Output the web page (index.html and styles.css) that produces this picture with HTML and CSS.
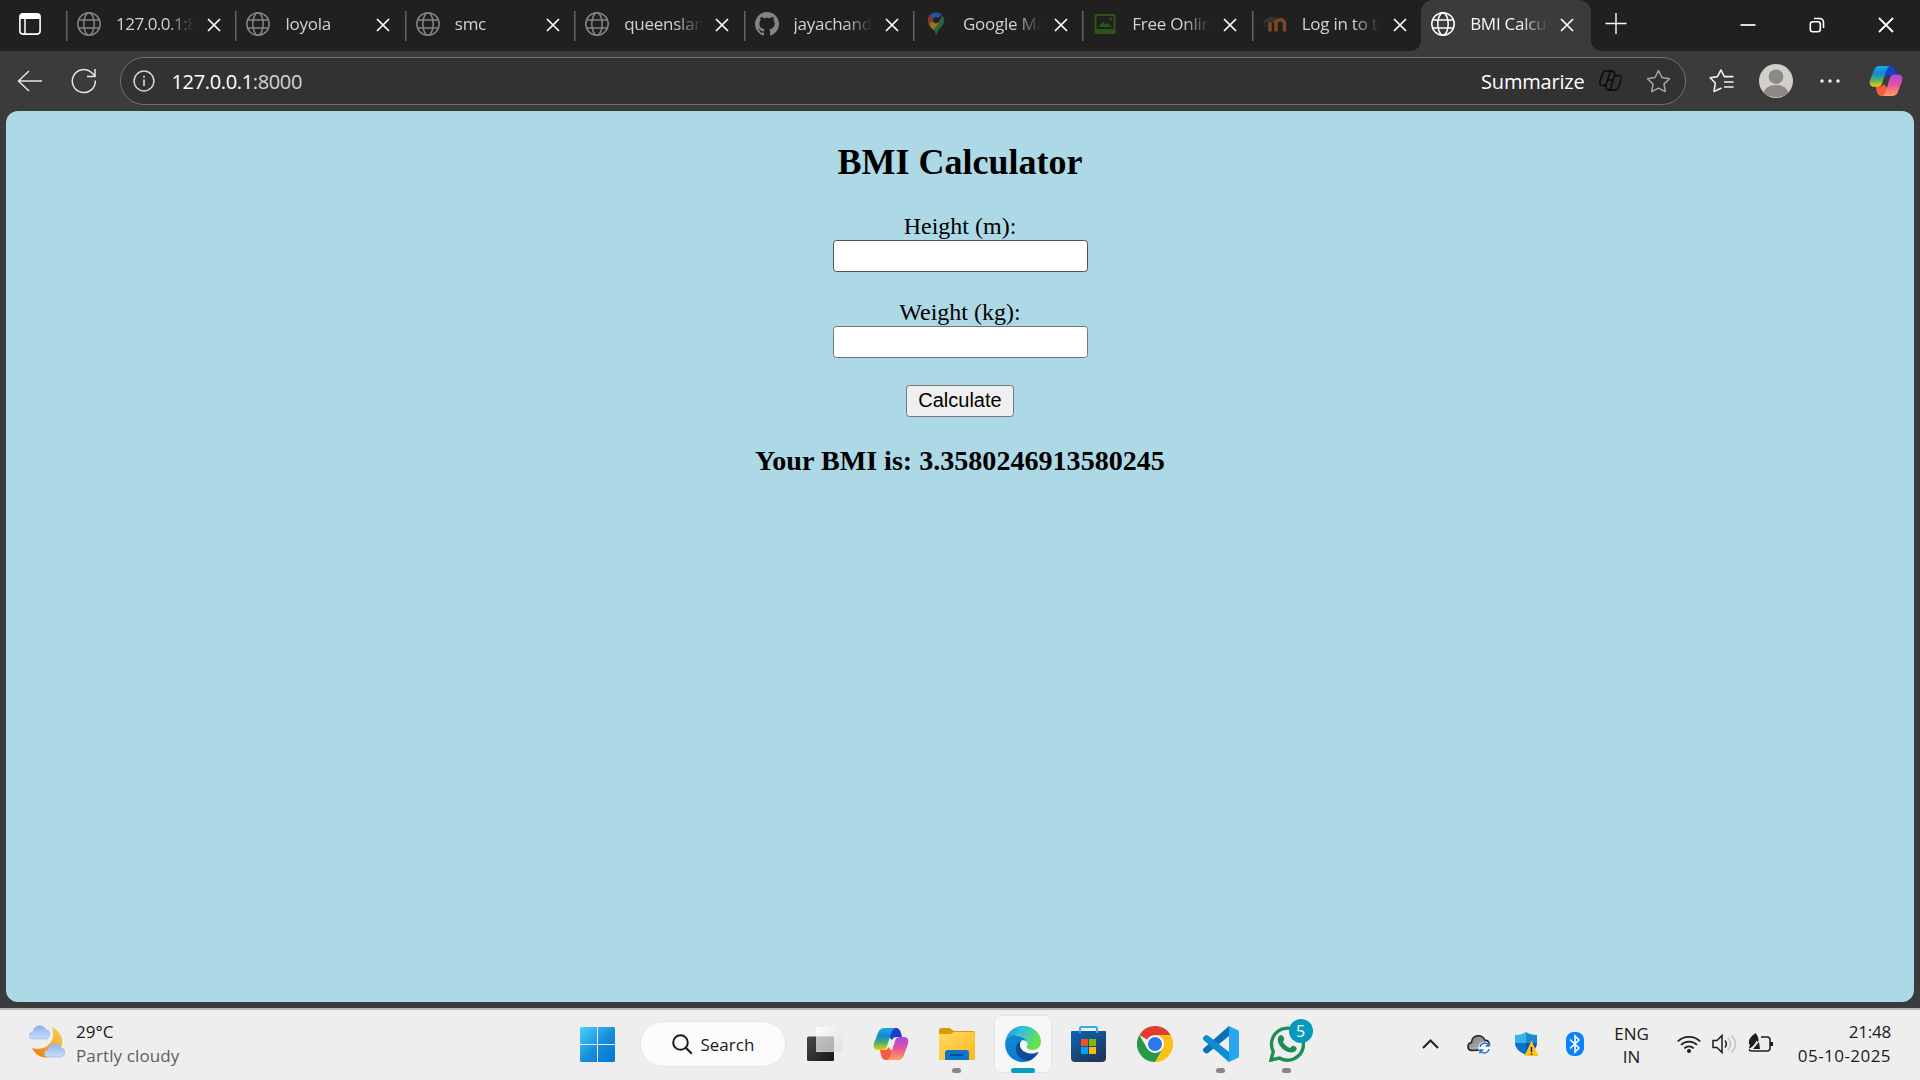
FILE: index.html
```html
<!DOCTYPE html>
<html lang="en">
<head>
<meta charset="utf-8">
<title>BMI Calculator</title>
<link rel="stylesheet" href="styles.css">
</head>
<body>
<svg class="defs" aria-hidden="true">
  <defs>
    <symbol id="globe" viewBox="0 0 24 24"><g fill="none" stroke="currentColor" stroke-width="1.5"><circle cx="12" cy="12" r="11.2"/><ellipse cx="12" cy="12" rx="5.2" ry="11.2"/><path d="M1.8 8h20.4M1.8 16h20.4"/></g></symbol>
    <symbol id="close" viewBox="0 0 14 14"><path d="M1 1l12 12M13 1L1 13" fill="none" stroke="currentColor" stroke-width="1.7"/></symbol>
    <linearGradient id="cpA" x1="0" y1="0" x2="0" y2="1"><stop offset="0" stop-color="#19a8ee"/><stop offset=".35" stop-color="#1686d6"/><stop offset=".65" stop-color="#42ad70"/><stop offset="1" stop-color="#f5cc08"/></linearGradient>
    <linearGradient id="cpB" x1="0" y1="0" x2="0" y2="1"><stop offset="0" stop-color="#a24be8"/><stop offset=".5" stop-color="#e9529c"/><stop offset="1" stop-color="#ffa35c"/></linearGradient>
    <symbol id="copilot" viewBox="0 0 36 34">
      <path d="M17 1h6c3 0 4 2 5 5l1 4h-5c-3 0-4 1-5 3l-3-3z" fill="#173fc7"/>
      <path d="M19 33h-6c-3 0-4-2-5-5l-1-5h4c3 0 4-1 4-3l4 4z" fill="#f45d3d"/>
      <path d="M11 1h11c-2 1-3 3-4 6l-4 12c-1 3-2 4-5 4H5c-4 0-5-3-4-7L5 6c1-3 3-5 6-5z" fill="url(#cpA)"/>
      <path d="M25 33H14c2-1 3-3 4-6l4-13c1-3 2-4 5-4h4c4 0 5 3 4 7l-4 11c-1 3-3 5-6 5z" fill="url(#cpB)"/>
    </symbol>
    <linearGradient id="winPane" gradientUnits="userSpaceOnUse" x1="0" y1="0" x2="35" y2="35"><stop offset="0" stop-color="#4cd2ff"/><stop offset=".55" stop-color="#168bd9"/><stop offset="1" stop-color="#0078d4"/></linearGradient>
    <linearGradient id="dark" x1="0" y1="0" x2="1" y2="1"><stop stop-color="#4b4a48"/><stop offset="1" stop-color="#181818"/></linearGradient>
    <linearGradient id="pale" x1="0" y1="0" x2="1" y2="1"><stop stop-color="#fff" stop-opacity=".95"/><stop offset="1" stop-color="#ddd" stop-opacity=".75"/></linearGradient>
    <linearGradient id="folder" x1="0" y1="0" x2="1" y2="1"><stop stop-color="#ffd965"/><stop offset="1" stop-color="#fcb91a"/></linearGradient>
    <linearGradient id="edgeTop" x1="0" y1="0" x2="1" y2=".4"><stop stop-color="#1590d5"/><stop offset=".45" stop-color="#32c0df"/><stop offset="1" stop-color="#68e34d"/></linearGradient>
    <linearGradient id="edgeLeft" x1="0" y1="0" x2=".5" y2="1"><stop stop-color="#1488d2"/><stop offset="1" stop-color="#0a78d6"/></linearGradient>
    <linearGradient id="store" x1="0" y1="0" x2=".6" y2="1"><stop stop-color="#0d65b8"/><stop offset="1" stop-color="#20375d"/></linearGradient>
    <linearGradient id="moon" x1="1" y1="0" x2="0" y2="1"><stop stop-color="#f6cd62"/><stop offset=".5" stop-color="#f2ae28"/><stop offset="1" stop-color="#ee6e13"/></linearGradient>
    <linearGradient id="cloud" x1="0" y1="0" x2="0" y2="1"><stop stop-color="#8fb3ec"/><stop offset="1" stop-color="#c9dcf8"/></linearGradient>
    <linearGradient id="grey" x1="0" y1="0" x2="1" y2="1"><stop stop-color="#777"/><stop offset="1" stop-color="#c5c5c5"/></linearGradient>
  </defs>
</svg>

<header class="tabstrip">
  <div class="workspace"><svg width="22" height="22" viewBox="0 0 22 22"><rect x=".9" y=".9" width="20.2" height="20.2" rx="3" fill="none" stroke="#fff" stroke-width="1.6"/><path d="M1 6V4a3 3 0 0 1 3-3h14a3 3 0 0 1 3 3v2z" fill="#fff"/><path d="M6 6v15" stroke="#fff" stroke-width="1.5"/></svg></div>
  <nav class="tabs">
    <div class="tab"><svg class="favicon"><use href="#globe"/></svg><span class="label numeric">127.0.0.1:8000</span><svg class="close"><use href="#close"/></svg></div>
    <div class="tab"><svg class="favicon"><use href="#globe"/></svg><span class="label">loyola</span><svg class="close"><use href="#close"/></svg></div>
    <div class="tab"><svg class="favicon"><use href="#globe"/></svg><span class="label">smc</span><svg class="close"><use href="#close"/></svg></div>
    <div class="tab"><svg class="favicon"><use href="#globe"/></svg><span class="label">queensland</span><svg class="close"><use href="#close"/></svg></div>
    <div class="tab"><svg class="favicon" viewBox="0 0 16 16"><path fill="currentColor" d="M8 0C3.58 0 0 3.58 0 8c0 3.54 2.29 6.53 5.47 7.59.4.07.55-.17.55-.38 0-.19-.01-.82-.01-1.49-2.01.37-2.53-.49-2.69-.94-.09-.23-.48-.94-.82-1.13-.28-.15-.68-.52-.01-.53.63-.01 1.08.58 1.23.82.72 1.21 1.87.87 2.33.66.07-.52.28-.87.51-1.07-1.78-.2-3.64-.89-3.64-3.95 0-.87.31-1.59.82-2.15-.08-.2-.36-1.02.08-2.12 0 0 .67-.21 2.2.82a7.6 7.6 0 0 1 4 0c1.53-1.04 2.2-.82 2.2-.82.44 1.1.16 1.92.08 2.12.51.56.82 1.27.82 2.15 0 3.07-1.87 3.75-3.65 3.95.29.25.54.73.54 1.48 0 1.07-.01 1.93-.01 2.2 0 .21.15.46.55.38A8.01 8.01 0 0 0 16 8c0-4.42-3.58-8-8-8z"/></svg><span class="label">jayachandra</span><svg class="close"><use href="#close"/></svg></div>
    <div class="tab"><svg class="favicon" viewBox="0 0 24 24"><path d="M4 8a8 8 0 0 1 14-5l-6 5-6 5c-1-1-2-3-2-5z" fill="#265495"/><path d="M5.5 3.5L10 7l-5 6c-1.500-3-1.700-6 .5-9.500z" fill="#8b352b"/><path d="M18.500 3.500c3 4 1.500 8-.5 10.500-3 4-4.500 5-6 10-1-4-1.500-5-2.500-7z" fill="#28653a"/><path d="M5 12l5-4 5 3-5.500 7c-2-2-3.500-3-4.500-6z" fill="#967321"/><circle cx="12" cy="8.300" r="3" fill="#202020"/></svg><span class="label">Google Maps</span><svg class="close"><use href="#close"/></svg></div>
    <div class="tab"><svg class="favicon" viewBox="0 0 24 24"><rect x="1.500" y="2" width="21" height="20" rx="1.500" fill="#2f5418"/><path d="M3.500 4h17v13h-17z" fill="#202020"/><path d="M5 15l5-5 2.500 2.500 2-1.500 4.500 4z" fill="#2f5418"/><circle cx="17.500" cy="7" r="1.400" fill="#2f5418"/></svg><span class="label">Free Online</span><svg class="close"><use href="#close"/></svg></div>
    <div class="tab"><svg class="favicon" viewBox="0 0 24 24"><path d="M7 20v-8c0-4 6-4 6 0v8m0-8c0-5 8.500-5 8.500 0v8" fill="none" stroke="#7d4821" stroke-width="3.500" transform="translate(0 -.5)"/><path d="M0 9l7-4 7 1-5 4-6 0zM2 9v6" fill="#393534" stroke="#33302f"/></svg><span class="label">Log in to the</span><svg class="close"><use href="#close"/></svg></div>
    <div class="tab active"><svg class="favicon"><use href="#globe"/></svg><span class="label">BMI Calculator</span><svg class="close"><use href="#close"/></svg></div>
  </nav>
  <div class="newtab"><svg width="22" height="22" viewBox="0 0 22 22"><path d="M11 0v21M.5 10.500h21" stroke="#fff" stroke-width="1.400"/></svg></div>
  <div class="window-controls">
    <svg width="16" height="16" viewBox="0 0 16 16"><path d="M.5 8h15" stroke="#fff" stroke-width="1.700"/></svg>
    <svg width="16" height="16" viewBox="0 0 16 16"><g fill="none" stroke="#fff" stroke-width="1.600"><rect x="1.300" y="4.800" width="10" height="10" rx="2.500"/><path d="M5 1.500h5.500a4 4 0 0 1 4 4V11"/></g></svg>
    <svg width="16" height="16" viewBox="0 0 16 16"><path d="M1 1l14 14M15 1L1 15" stroke="#fff" stroke-width="1.800"/></svg>
  </div>
</header>

<div class="toolbar">
  <svg class="back" width="25" height="22" viewBox="0 0 25 22"><path d="M12 1L1.500 11 12 21M1.500 11H25" fill="none" stroke="#e6e6e6" stroke-width="1.500"/></svg>
  <svg class="reload" width="26" height="26" viewBox="0 0 26 26"><path d="M24.300 12.500A11.500 11.500 0 1 1 20.500 4.500L24 8M24 1v7.500h-8" fill="none" stroke="#e6e6e6" stroke-width="1.500"/></svg>
  <div class="address">
    <svg width="22" height="22" viewBox="0 0 22 22"><circle cx="11" cy="11" r="9.900" fill="none" stroke="#d4d4d4" stroke-width="1.500"/><path d="M11 9.500V16M11 5.800v2" stroke="#d4d4d4" stroke-width="1.700"/></svg>
    <span class="url">127.0.0.1<span class="port">:8000</span></span>
    <span class="summarize">Summarize</span>
    <svg class="mini-copilot" width="23" height="22" viewBox="0 0 23 22"><g fill="none" stroke="#0b0b0b" stroke-width="1.400"><path d="M6.500 1H13c2.200 0 2.600 2 3 4.500h3.500c2.500 0 3 2 2.500 4l-2 6.500c-.7 2.500-1.800 4-4 4H9.500c-2 0-2.300-2-2.800-4.500H3.500C1 15.500.5 13.500 1 11.500L3 5c.7-2.500 1.500-4 3.500-4z"/><path d="M13 1c-1.800 0-2.200 1.500-2.700 3.500L8 12.500c-.5 2-1.200 3-3 3M9.500 20c1.800 0 2.200-1.500 2.700-3.500l2.300-8c.5-2 1.200-3 3-3M9 10h5"/></g></svg>
    <svg class="star" width="25" height="24" viewBox="0 0 25 24"><path d="M12.500 1.500l3.500 7 7.500 1.200-5.500 5.400 1.300 7.500-6.800-3.500-6.800 3.500L7 15.100 1.500 9.700 9 8.500z" fill="none" stroke="#a5a5a5" stroke-width="1.500" stroke-linejoin="round"/></svg>
  </div>
  <svg class="favorites" width="25" height="24" viewBox="0 0 25 24"><path d="M12.500 19L5 22.500l1.300-8.500L1.200 8.800l7.200-1.200L12 1l3.300 6.600h9.200M15 13h9.500M15 18h9.500" fill="none" stroke="#f1f1f1" stroke-width="1.600" stroke-linejoin="round"/></svg>
  <svg class="profile" width="34" height="34" viewBox="0 0 34 34"><circle cx="17" cy="17" r="17" fill="#d0cfcc"/><circle cx="17" cy="12.700" r="7.300" fill="#8c8885"/><path d="M5 29a12 8 0 0 1 24 0c-6 5.500-18 5.500-24 0z" fill="#8c8885"/></svg>
  <svg class="more" width="20" height="4" viewBox="0 0 20 4"><g fill="#f4f4f4"><circle cx="2" cy="2" r="1.700"/><circle cx="10" cy="2" r="1.700"/><circle cx="18" cy="2" r="1.700"/></g></svg>
  <svg class="sidebar" width="34" height="32"><use href="#copilot"/></svg>
</div>

<main class="page">
  <h2>BMI Calculator</h2>
  <form>
    <label for="height">Height (m):</label>
    <input id="height" class="hovered" type="text">
    <label for="weight">Weight (kg):</label>
    <input id="weight" type="text">
    <button type="button">Calculate</button>
  </form>
  <h3>Your BMI is: 3.3580246913580245</h3>
</main>

<footer class="taskbar">
  <div class="weather">
    <svg width="36" height="34" viewBox="0 0 36 34"><path d="M23 2c10 5 14 16 6 25-7 8-20 8-26-4 14 4 25-7 20-21z" fill="url(#moon)"/><path d="M4 14c-5 0-5-7 0-7 1-8 11-8 13-2 5-1 5 9 0 9z" fill="url(#cloud)" stroke="#93b4ea" stroke-width=".6"/><path d="M19 32c-5 0-5-7 0-7 1-8 11-8 13-2 5 0 5 9 0 9z" fill="url(#cloud)" stroke="#93b4ea" stroke-width=".6"/></svg>
    <div class="forecast"><span>29°C</span><span class="condition">Partly cloudy</span></div>
  </div>
  <div class="apps">
    <div class="app"><svg width="35" height="35" viewBox="0 0 35 35"><path d="M1 0h16v17H0V1zM18 0h16l1 1v16H18zM0 18h17v17H1l-1-1zM18 18h17v16l-1 1H18z" fill="url(#winPane)"/></svg></div>
    <div class="search-cell"><div class="search"><svg width="21" height="21" viewBox="0 0 21 21"><circle cx="8.500" cy="8.500" r="7.300" fill="none" stroke="#1b1b1b" stroke-width="2"/><path d="M13.800 13.800l6 6" stroke="#1b1b1b" stroke-width="2.200"/></svg><span>Search</span></div></div>
    <div class="app"><svg width="36" height="36" viewBox="0 0 36 36"><rect x="0" y="10.500" width="27" height="24.500" rx="1.500" fill="url(#dark)"/><rect x="9" y="1" width="27" height="25" rx="1" fill="url(#pale)"/><rect x="9" y="10.500" width="18" height="14.500" fill="#aaa" opacity=".65"/></svg></div>
    <div class="app"><svg width="36" height="34"><use href="#copilot"/></svg></div>
    <div class="app"><svg width="36" height="36" viewBox="0 0 36 36"><path d="M0 4a2 2 0 0 1 2-2h8c2 0 3 2 5 3h19a2 2 0 0 1 2 2v3H0z" fill="#dc9a08"/><path d="M0 8h11c2 0 3-2 5-2h18a2 2 0 0 1 2 2v26H0z" fill="url(#folder)"/><path d="M6 34V27a3 3 0 0 1 3-3h18a3 3 0 0 1 3 3v7z" fill="#0c76cb"/><path d="M11 29h14" stroke="#064b91" stroke-width="2"/></svg><i class="running"></i></div>
    <div class="app current"><svg width="36" height="36" viewBox="0 0 36 36"><path d="M.3 16C2 9 9 8 14 10c5 1 8 4 8 6-3-3-8-2-8 3 0 7 8 13 19 7.500C29 33 24 36 18 36 7 36-1 27 .3 16z" fill="url(#edgeLeft)"/><path d="M.3 15.500C2 6 9 0 18 0c11 0 18 8 18 15.500 0 6-4 8.500-9 8.500-4 0-6-2-5-4 1.500-3-.5-8-8.500-10.500C8 8 2.500 10.500.3 15.500z" fill="url(#edgeTop)"/><path d="M17 14.500c-8 2-8 13-1 18 4 3 8 3 12 0 2-1.500 4.500-4 5.300-6-.5-.8-1-.2-2 .2-6 2.300-14-.2-16-5.700-1-3 0-5.500 1.700-6.500z" fill="#104b96"/></svg><i class="running"></i></div>
    <div class="app"><svg width="35" height="36" viewBox="0 0 35 36"><path d="M9 7V2.500a1.500 1.500 0 0 1 1.500-1.500h14A1.500 1.500 0 0 1 26 2.500V7" fill="none" stroke="#2bb2ed" stroke-width="2"/><path d="M0 6a1 1 0 0 1 1-1h33a1 1 0 0 1 1 1v26a4 4 0 0 1-4 4H4a4 4 0 0 1-4-4z" fill="url(#store)"/><path d="M9 7V5M26 7V5" stroke="#2bb2ed" stroke-width="2"/><path d="M10 13h7v7h-7z" fill="#f25022"/><path d="M18 13h7v7h-7z" fill="#7fba00"/><path d="M10 21h7v7h-7z" fill="#00a4ef"/><path d="M18 21h7v7h-7z" fill="#ffb900"/></svg></div>
    <div class="app"><svg width="36" height="36" viewBox="0 0 36 36"><path d="M18 18L2.400 9A18 18 0 0 1 33.600 9z" fill="#e33b2e"/><path d="M18 9h15.600A18 18 0 0 1 18 36l7.800-13.500z" fill="#fbc116"/><path d="M2.400 9A18 18 0 0 0 18 36l7.800-13.500L18 27 10.200 22.500z" fill="#279847"/><circle cx="18" cy="18" r="9" fill="#fff"/><circle cx="18" cy="18" r="7.100" fill="#3178ef"/></svg></div>
    <div class="app"><svg width="36" height="36" viewBox="0 0 36 36"><path d="M26 0v10L5 27c-1 .6-2 .5-3 0l-2-2c-.7-1 0-2 1-3z" fill="#0871b6"/><path d="M26 36V26L5 9.500c-1-.8-2-.6-3 0l-2 2c-.7 1 0 2 1 3z" fill="#0d8bd3"/><path d="M26 0l8.500 4c1 .5 1.500 1 1.500 2v24c0 1-.5 1.700-1.500 2L26 36z" fill="#27a5ef"/></svg><i class="running"></i></div>
    <div class="app"><svg width="36" height="36" viewBox="0 0 36 36"><path d="M2 34l2.300-8.500A16 16 0 1 1 10.500 32z" fill="none" stroke="#208b57" stroke-width="3.400"/><path d="M10 10c2-2 4-1 5 2 1 2-1 3-1 4 2 3 4 5 7 6 1 0 2-3 4-2 4 1 3 5 0 6-8 3-20-9-15-16z" fill="#208b57"/></svg><b class="badge">5</b><i class="running"></i></div>
  </div>
  <div class="tray">
    <div class="tray-item"><svg width="17" height="10" viewBox="0 0 17 10"><path d="M1 9l7.500-7.500L16 9" fill="none" stroke="#222" stroke-width="2"/></svg></div>
    <div class="tray-item"><svg width="24" height="20" viewBox="0 0 24 20"><path d="M5 16.500c-5 0-5.500-7-.5-8C5 0 16 0 17.500 6c5-.3 6.500 6 3.500 9.500z" fill="url(#grey)" stroke="#1d1d1d" stroke-width="1.500"/><circle cx="17.500" cy="14" r="6.200" fill="#f7f9fb"/><path d="M13 13a4.700 4.700 0 0 1 8-2.500l1 1.500M22 15a4.700 4.700 0 0 1-8 2.500L13 16M22 8.500V12h-3.500M13 19.500V16h3.500" fill="none" stroke="#1471c6" stroke-width="1.400"/></svg></div>
    <div class="tray-item"><svg width="24" height="24" viewBox="0 0 24 24"><path d="M0 3c5 0 8-1 11-3v12H0z" fill="#35b4ec"/><path d="M11 0c3 2 6 3 11 3v9H11z" fill="#178bd4"/><path d="M0 11h11v12C4 20 0 16 0 11z" fill="#0b70c7"/><path d="M11 11h11c0 5-4 9-11 12z" fill="#0758a5"/><path d="M16.500 8.500L9.500 24h14z" fill="#ffc11a"/><path d="M16.500 15v5M16.500 21.200v1.500" stroke="#151515" stroke-width="1.400"/></svg></div>
    <div class="tray-item"><svg width="18" height="24" viewBox="0 0 18 24"><rect width="18" height="24" rx="8" fill="#0783fb"/><path d="M4 7.500l9 8.500-4 4V4l4 4-9 8.500" fill="none" stroke="#fff" stroke-width="1.600"/></svg></div>
    <div class="language"><span>ENG</span><span>IN</span></div>
    <div class="status">
      <svg width="24" height="18" viewBox="0 0 24 18"><g fill="none" stroke="#1d1d1d" stroke-width="1.700"><path d="M.7 6.500a16 16 0 0 1 22.600 0M4 10a11.300 11.300 0 0 1 16 0M7.300 13.300a6.600 6.600 0 0 1 9.400 0"/></g><circle cx="12" cy="16" r="2" fill="#1d1d1d"/></svg>
      <svg width="25" height="20" viewBox="0 0 25 20"><g fill="none" stroke="#1d1d1d" stroke-width="1.500"><path d="M1 6.500h4l5-5v17l-5-5H1zM13 6.500q2.700 3.500 0 7"/><g stroke="#c3c3c3"><path d="M16 4q5 6 0 12M19.500 1.500q8 8.500 0 17"/></g></g></svg>
      <svg class="battery" width="25" height="20" viewBox="0 0 25 20"><path d="M13 4h6a3 3 0 0 1 3 3v8a3 3 0 0 1-3 3H4q-2 0-3-1.500" fill="none" stroke="#1d1d1d" stroke-width="1.500"/><path d="M22 9h3v4h-3z" fill="#1d1d1d"/><path d="M7.500 0c2 3 3 4 3 8L5 14l-3 2-1-1.500 1-2C-1 8 2 4 7.500 0zM11 9l1 7H5z" fill="#1d1d1d"/><path d="M2 16q5-3 7-8" fill="none" stroke="#eee" stroke-width="1.200"/></svg>
    </div>
    <div class="clock"><span>21:48</span><span class="date">05-10-2025</span></div>
  </div>
</footer>
</body>
</html>
```
FILE: styles.css
```css
* { box-sizing: border-box; }
body {
  margin: 0;
  width: 1920px;
  height: 1080px;
  overflow: hidden;
  display: flex;
  flex-direction: column;
  background: #3b3b3b;
  font-family: "Open Sans", "Noto Sans", sans-serif;
}
svg { display: block; flex: none; }
.defs { position: absolute; width: 0; height: 0; }

.tabstrip { display: flex; height: 51px; flex: none; background: #202020; }
.workspace { width: 66px; padding: 13px 0 0 19px; }
.tabs { display: flex; }
.tab {
  position: relative;
  display: flex;
  width: 169.4px;
  height: 51px;
  padding: 12px 0 0 9px;
  color: #848484;
  background: linear-gradient(#646464, #646464) 0 11px / 1.5px 30px no-repeat;
}
.favicon { width: 24px; height: 24px; margin-left: 2px; }
.label {
  width: 79px;
  margin-left: 15px;
  overflow: hidden;
  white-space: nowrap;
  font-size: 17px;
  letter-spacing: -.25px;
  line-height: 24px;
  color: #d2d2d2;
  -webkit-mask-image: linear-gradient(90deg, #000 65%, transparent 99%);
  mask-image: linear-gradient(90deg, #000 65%, transparent 99%);
}
.numeric { letter-spacing: -.5px; }
.close { width: 14px; height: 14px; margin: 6px 0 0 12px; color: #fff; }
.tab.active { background: #3b3b3b; border-radius: 12px 12px 0 0; color: #fff; }
.active .favicon { margin-left: 1px; }
.active .label { color: #f5f5f5; }
.active .close { margin-left: 11px; }
.active::before, .active::after {
  content: "";
  position: absolute;
  bottom: 0;
  width: 10px;
  height: 10px;
}
.active::before { left: -10px; background: radial-gradient(circle at 0 0, transparent 9.5px, #3b3b3b 10px); }
.active::after { right: -10px; background: radial-gradient(circle at 100% 0, transparent 9.5px, #3b3b3b 10px); }
.newtab { padding: 13px 0 0 14px; }
.window-controls { display: flex; gap: 53px; margin-left: auto; padding: 17px 26.500px 0 0; }

.toolbar { display: flex; align-items: center; height: 60px; flex: none; padding: 0 6px 0 17px; }
.reload { margin-left: 29px; }
.address {
  display: flex;
  align-items: center;
  width: 1566px;
  height: 48px;
  margin-left: 22.500px;
  padding: 0 14px 0 12px;
  border: 1.500px solid #717171;
  border-radius: 24px;
  background: #323232;
  font-size: 20px;
  color: #fff;
}
.url { margin-left: 17px; letter-spacing: -.35px; }
.port { color: #d5d5d5; }
.summarize { margin-left: auto; letter-spacing: -.2px; }
.mini-copilot { margin-left: 14px; }
.star { margin-left: 24px; }
.favorites { margin-left: 23px; }
.profile { margin-left: 25px; }
.more { margin-left: 27px; }
.sidebar { margin-left: 29px; }

.page {
  width: 1908px;
  height: 891px;
  flex: none;
  margin: 0 6px;
  padding-top: 31px;
  border-radius: 12px;
  background: #add8e6;
  color: #000;
  font-family: "Liberation Serif", "Times New Roman", serif;
  text-align: center;
}
h2 { margin: 0; height: 70px; font-size: 36px; line-height: 41px; }
form { display: flex; flex-direction: column; align-items: center; font-size: 24px; }
label { height: 28px; line-height: 29px; }
input {
  width: 255px;
  height: 32px;
  margin-bottom: 26px;
  border: 1px solid #767676;
  border-radius: 3.500px;
  background: #fff;
}
input.hovered { border-color: #4f4f4f; }
button {
  width: 108px;
  height: 32px;
  margin-top: 1px;
  padding: 0 0 1px;
  border: 1px solid #767676;
  border-radius: 3.500px;
  background: #efefef;
  color: #000;
  font: 20px/27px "Liberation Sans", Arial, sans-serif;
}
h3 { margin: 28px 0 0; font-size: 28.080px; line-height: 32px; }

.taskbar {
  display: flex;
  height: 72px;
  margin-top: 6px;
  flex: none;
  background: #eee;
  border-top: 2px solid #b9b9b9;
  color: #1b1b1b;
  font-size: 17px;
}
.weather { display: flex; width: 564.500px; padding: 15px 0 0 29px; }
.forecast { display: flex; flex-direction: column; margin: -5px 0 0 11px; line-height: 24px; }
.condition { color: #5d5d5d; letter-spacing: .12px; }
.apps { display: flex; }
.app { position: relative; display: flex; align-items: center; justify-content: center; width: 66px; height: 68px; }
.search-cell { width: 161px; padding: 11px 0 0 9px; }
.search {
  display: flex;
  align-items: center;
  width: 146px;
  height: 46px;
  padding-left: 31px;
  gap: 8px;
  border: 1px solid #e5e5e5;
  border-radius: 23px;
  background: #fbfbfb;
}
.current { width: 58px; height: 58px; margin: 5px 4px 0; border: 1px solid #e4e4e4; border-radius: 7px; background: #f7f7f7; }
.running { position: absolute; left: 50%; bottom: 5px; width: 9px; height: 5px; margin-left: -4.500px; border-radius: 3px; background: #858585; }
.current .running { bottom: -1px; width: 24px; margin-left: -12px; background: #099dbf; }
.badge {
  position: absolute;
  left: 35px;
  top: 9px;
  width: 24px;
  height: 24px;
  border-radius: 50%;
  background: #0799bd;
  color: #fff;
  font-size: 16px;
  font-weight: 400;
  line-height: 24px;
  text-align: center;
}
.tray { display: flex; flex: 1; padding-left: 87px; }
.tray-item { display: flex; align-items: center; justify-content: center; width: 48px; height: 68px; }
.language, .clock { display: flex; flex-direction: column; padding-top: 12px; line-height: 23px; }
.language { width: 66px; align-items: center; font-size: 17px; }
.status { display: flex; align-items: center; gap: 11px; height: 68px; padding-left: 12px; }
.battery { margin-top: -3px; }
.clock { margin-left: auto; padding: 10px 29px 0 0; align-items: flex-end; line-height: 24px; letter-spacing: -.2px; }
.date { letter-spacing: .45px; }
```
